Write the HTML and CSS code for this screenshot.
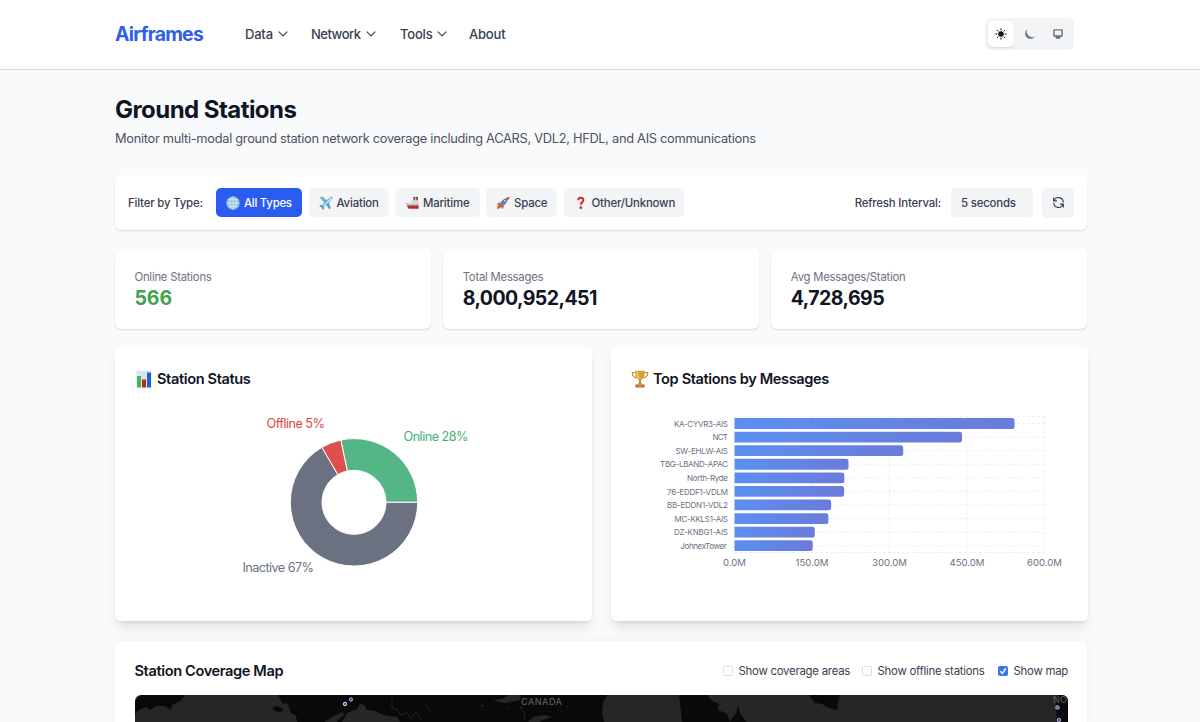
FILE: index.html
```html
<!DOCTYPE html>
<html lang="en">
<head>
  <meta charset="UTF-8">
  <meta name="viewport" content="width=device-width, initial-scale=1.0">
  <title>Ground Stations - Airframes</title>
  <link rel="stylesheet" href="styles.css">
</head>
<body>
  <header class="header">
    <div class="container header-inner">
      <a class="logo">Airframes</a>
      <nav class="nav">
        <a class="nav-data">Data <svg class="chevron" viewBox="0 0 10 6"><path d="M1 .8l4 4 4-4"/></svg></a>
        <a class="nav-network">Network <svg class="chevron" viewBox="0 0 10 6"><path d="M1 .8l4 4 4-4"/></svg></a>
        <a class="nav-tools">Tools <svg class="chevron" viewBox="0 0 10 6"><path d="M1 .8l4 4 4-4"/></svg></a>
        <a>About</a>
      </nav>
      <div class="theme-switch">
        <button class="active" aria-label="Light">
          <svg width="12" height="12" viewBox="0 0 12 12"><circle cx="6" cy="6" r="2.7" fill="currentColor"/><path d="M6 .8v1.3M6 9.9v1.3M.8 6h1.3M9.9 6h1.3M2.3 2.3l.9.9M8.8 8.8l.9.9M2.3 9.7l.9-.9M8.8 3.2l.9-.9" stroke="currentColor" stroke-width="1" stroke-linecap="round"/></svg>
        </button>
        <button aria-label="Dark">
          <svg width="12" height="12" viewBox="0 0 12 12"><path d="M3.6 1A5.300 5.300 0 1 0 11 8.200 5.300 5.300 0 0 1 3.600 1z" fill="currentColor"/></svg>
        </button>
        <button aria-label="System">
          <svg width="12" height="12" viewBox="0 0 12 12"><path d="M2.600 1.200h6.800a1.400 1.400 0 0 1 1.400 1.400v5a1.400 1.400 0 0 1-1.400 1.400H8.200v1.700H3.800V9H2.600a1.400 1.400 0 0 1-1.400-1.400v-5a1.400 1.400 0 0 1 1.400-1.400zM2.600 2.600v4.700h6.800V2.600z" fill="currentColor" fill-rule="evenodd"/></svg>
        </button>
      </div>
    </div>
  </header>

  <main class="container">
    <h1>Ground Stations</h1>
    <p class="subtitle">Monitor multi-modal ground station network coverage including ACARS, VDL2, HFDL, and AIS communications</p>

    <section class="filters">
      <span class="filter-label">Filter by Type:</span>
      <div class="filter-buttons">
        <button class="filter-all active">
          <svg class="emoji" viewBox="0 0 14 14"><circle cx="7" cy="7" r="6.6" fill="#8fc6ea"/><path d="M7 .4v13.200M.4 7h13.200M1.500 3.600h11M1.500 10.400h11M7 .4C2.500 4 2.500 10 7 13.600M7 .4c4.500 3.600 4.500 9.600 0 13.200" fill="none" stroke="#e4f3dd" stroke-width=".7"/><circle cx="7" cy="7" r="6.500" fill="none" stroke="#5e9bd1" stroke-width=".6"/></svg>
          <span>All Types</span>
        </button>
        <button class="filter-aviation">
          <svg class="emoji" viewBox="0 0 14 14"><path d="M1 1.500l3-.3 3.500 3.500 3.500-3c1-.9 2-.9 2.200-.5.2.5 0 1.300-1 2.200L9.500 6.500l2 5.500-1 1L7.300 8.600 4.500 11l.2 2-.8.5-1.100-2.200L.6 10l.7-.8 2 .2L5.700 6.500z" fill="#4f9fce" stroke="#3c7da8" stroke-width=".4"/><path d="M4.500 10L12.600 1.700" stroke="#dcecf5" stroke-width="1.300"/><path d="M2 1.900l4 2.700" stroke="#9ccbe6" stroke-width=".8"/></svg>
          <span>Aviation</span>
        </button>
        <button class="filter-maritime">
          <svg class="emoji" viewBox="0 0 14 14"><path d="M8.500 1h1.800v4H8.500zM11.200 1H13v4h-1.800z" fill="#c9372f"/><path d="M8.500 1h1.800v1.200H8.500zM11.200 1H13v1.200h-1.800z" fill="#40404a"/><path d="M6.500 4.300h6.800v4H5.500z" fill="#d9dcdf"/><path d="M.4 6.200l3.600 1.600h9.600v3H2.500z" fill="#b9bfc5"/><path d="M1.900 9.500h11.700v3.200H3.500z" fill="#b62d2b"/></svg>
          <span>Maritime</span>
        </button>
        <button class="filter-space">
          <svg class="emoji" viewBox="0 0 14 14"><path d="M2 10l-1.500 3.600L4.500 12z" fill="#f59d22"/><path d="M3.500 6.200L.8 8.300l3.400.6zM8 10l-1.800 3.200-1-3.200z" fill="#c83a2c"/><path d="M3.300 9.500C4.500 5 8 2 11.700 2.200 12 6 9 9.600 4.700 11z" fill="#7480a8"/><path d="M10 2.300c1-.8 2.500-1.400 3.500-1.600-.1 1.200-.7 2.500-1.500 3.500z" fill="#ce3e33"/><circle cx="9" cy="5" r="1.300" fill="#d6eaf8" stroke="#33456c" stroke-width=".5"/><path d="M1.300 9.800l3.200-1 .9 2.200-3.500 1.500z" fill="#e85325"/></svg>
          <span>Space</span>
        </button>
        <button class="filter-other">
          <svg class="emoji" viewBox="0 0 14 14"><path d="M4.200 4.200C4.200 2.500 5.300 1.700 6.700 1.700s2.700.9 2.700 2.400C9.400 6.300 6.900 6 6.900 8.700" fill="none" stroke="#cc2f27" stroke-width="2"/><circle cx="6.800" cy="11.700" r="1.400" fill="#cc2f27"/></svg>
          <span>Other/Unknown</span>
        </button>
      </div>
      <span class="refresh-label">Refresh Interval:</span>
      <button class="interval">5 seconds</button>
      <button class="refresh" aria-label="Refresh">
        <svg width="13" height="13" viewBox="0 0 13 13" fill="none" stroke="currentColor" stroke-width="1.2" stroke-linecap="round" stroke-linejoin="round"><path d="M1.700 2v2.900h2.900M11.300 11V8.100H8.400M2 4.900A4.700 4.700 0 0 1 11.200 6M11 8.100A4.700 4.700 0 0 1 1.800 7"/></svg>
      </button>
    </section>

    <section class="stats">
      <div class="stat">
        <div class="stat-label">Online Stations</div>
        <div class="stat-value green">566</div>
      </div>
      <div class="stat">
        <div class="stat-label">Total Messages</div>
        <div class="stat-value">8,000,952,451</div>
      </div>
      <div class="stat">
        <div class="stat-label">Avg Messages/Station</div>
        <div class="stat-value">4,728,695</div>
      </div>
    </section>

    <section class="charts">
      <div class="card">
        <h2>
          <svg class="emoji-lg" viewBox="0 0 18 18"><path d="M1.500.5h15v17h-15z" fill="#d5e6f2"/><path d="M2 6h4v11.500H2z" fill="#4bb749"/><path d="M7 9.500h4v8H7z" fill="#b52c2a"/><path d="M12 2.500h4v15h-4z" fill="#2b5fc0"/></svg>
          <span>Station Status</span>
        </h2>
        <svg class="chart" viewBox="135 397 437 205">
          <g stroke="#fff" stroke-width="1">
            <path d="M417.700 502.300A63.700 63.700 0 0 0 340.750 440L347.300 471A32 32 0 0 1 386 502.300z" fill="#54b685"/>
            <path d="M340.750 440A63.700 63.700 0 0 0 321.800 447.400L337.800 474.700A32 32 0 0 1 347.300 471z" fill="#df4f4c"/>
            <path d="M321.800 447.400A63.700 63.700 0 1 0 417.700 502.300H386A32 32 0 1 1 337.800 474.700z" fill="#6b7180"/>
          </g>
          <g class="pie-labels">
            <text x="403.500" y="440.500" textLength="65" fill="#45ae79">Online 28%</text>
            <text x="266.500" y="428" textLength="58.500" fill="#dc4646">Offline 5%</text>
            <text x="242.500" y="572" textLength="71.500" fill="#6b7180">Inactive 67%</text>
          </g>
        </svg>
      </div>
      <div class="card">
        <h2>
          <svg class="emoji-lg" viewBox="0 0 18 18"><path d="M4.500 2.500H1.300c0 3.500 1.700 5 4.500 5.500M13.500 2.500h3.200c0 3.500-1.700 5-4.500 5.500" fill="none" stroke="#c98c24" stroke-width="1.200"/><path d="M4 .8h10c0 5-1.300 8.700-5 9.700C5.300 9.500 4 5.800 4 .8z" fill="#d9a036"/><path d="M6.200 1.500c0 3.500.6 5.800 2 7.300" stroke="#f5d581" stroke-width="1.300" fill="none"/><path d="M8 10h2v3l1.800 1.500H6.200L8 13z" fill="#c58525"/><path d="M4.500 14.500h9v3h-9z" fill="#a5622c"/><path d="M6.500 15.500h5v1h-5z" fill="#e2b65c"/></svg>
          <span>Top Stations by Messages</span>
        </h2>
        <svg class="chart" viewBox="630.500 397 437 205">
          <defs>
            <linearGradient id="barGradient">
              <stop offset="0" stop-color="#5c8ff0"/>
              <stop offset="1" stop-color="#6a7bdb"/>
            </linearGradient>
          </defs>
          <g id="grid" class="grid"></g>
          <g id="bars"></g>
          <g id="names" class="names"></g>
          <g id="ticks" class="ticks"></g>
        </svg>
      </div>
    </section>

    <section class="map-card">
      <div class="map-header">
        <h2>Station Coverage Map</h2>
        <div class="map-options">
          <label class="opt-coverage"><span class="check"></span>Show coverage areas</label>
          <label class="opt-offline"><span class="check"></span>Show offline stations</label>
          <label class="opt-map"><span class="check checked"><svg viewBox="0 0 10 10"><path d="M2.300 5.300l2 2.200 3.500-5"/></svg></span>Show map</label>
        </div>
      </div>
      <svg class="map" viewBox="135 695 933 27">
        <rect x="135" y="695" width="933" height="27" fill="#262626"/>
        <g fill="#090909">
          <path d="M141 695H185L180 701 172 705 171 710 165 706 156 706 150 710 146 707 139 710 135 714V701z"/>
          <path d="M278 695H607L603 703 602 712 604 722H297L296 716 290 712 289 706 286 703 283 704z"/>
          <path d="M272 709l4-3 6 2 1 3-5 1zM246 706l3 0 0 1z"/>
          <path d="M679 695H707L711 700 719 704 718 710 727 714 730 722H682L681 712 680 704z"/>
          <path d="M738 705l2 8 5 7 1 2H730l2-4 4-4z"/>
          <path d="M809 695H840L838 702 837 710 829 708 822 704 815 703z"/>
          <path d="M1056 703l2-8h10v27h-11l-1-10z"/>
        </g>
        <g fill="#262626">
          <path d="M324 722l10-6 8-4 3 2-6 5-2 3zM342 722l5-9 10-4 3-6 5 3 2 4 8 1 8 4 14 2 3 5z"/>
          <path d="M493 700l9-1 6-4h13l-1 5-9 2-7 1zM528 722l5-5 10-2 10 2-7 2-8 3z"/>
          <path d="M480 706l4-2-1 3zM506 708l4-1 0 1zM567 705l3 5-3-3z"/>
        </g>
        <path d="M392 695v13l5 1 4 6 6-2 4 6 5-7 5 8M425 704l6 9M520 706l5 8-1 6" fill="none" stroke="#2b2b2b" stroke-width=".8"/>
        <text class="map-label" x="521" y="704.500" textLength="41">CANADA</text>
        <text class="map-label" x="1053" y="703" textLength="14">NO</text>
        <g stroke-width="1" fill="#315879">
          <circle cx="345" cy="704" r="1.700" stroke="#c7e2f4"/>
          <circle cx="351" cy="699.500" r="1.600" stroke="#b4b5ef"/>
          <circle cx="1057.500" cy="707.500" r="1.700" stroke="#b9dcf0"/>
          <circle cx="1059" cy="720" r="1.700" stroke="#c3a6e6"/>
        </g>
      </svg>
    </section>
  </main>

  <script>
    // [name, bar end x, label width]
    const stations = [
      ["KA-CYVR3-AIS", 1014, 54],
      ["NCT", 961.5, 15.5],
      ["SW-EHLW-AIS", 902.7, 52.5],
      ["TBG-LBAND-APAC", 848, 68],
      ["North-Ryde", 843.8, 41],
      ["76-EDDF1-VDLM", 843.6, 61],
      ["BB-EDDN1-VDL2", 830.6, 61],
      ["MC-KKLS1-AIS", 827.9, 53.5],
      ["DZ-KNBG1-AIS", 814.3, 54],
      ["JohnexTower", 812.2, 46.5]
    ];
    const left = 734, right = 1044, top0 = 416.7, rowHeight = 13.58;
    const bottom = top0 + rowHeight * stations.length;
    let grid = `<path d="M${left} ${top0}H${right}M${left} ${bottom}H${right}"/>`;
    let bars = "", names = "", ticks = "";

    stations.forEach(([name, end, width], i) => {
      const y = top0 + rowHeight * (i + 0.5);
      const nameEnd = name === "JohnexTower" ? 726.3 : 727.5;
      grid += `<path d="M${left} ${y}H${right}"/>`;
      bars += `<path d="M${left} ${y - 5.4}H${end - 2.5}q2.5 0 2.5 2.5v5.8q0 2.5-2.5 2.5H${left}z" fill="url(#barGradient)"/>`;
      names += `<text x="${nameEnd - width}" y="${y + 3.2}" textLength="${width}">${name}</text>`;
    });

    ["0.0M", "150.0M", "300.0M", "450.0M", "600.0M"].forEach((tick, i) => {
      const x = left + (right - left) * i / 4;
      grid += `<path d="M${x} ${top0}V${bottom}"/>`;
      ticks += `<text x="${x}" y="566.3">${tick}</text>`;
    });

    document.getElementById("grid").innerHTML = grid;
    document.getElementById("bars").innerHTML = bars;
    document.getElementById("names").innerHTML = names;
    document.getElementById("ticks").innerHTML = ticks;
  </script>
</body>
</html>
```
FILE: styles.css
```css
* {
  box-sizing: border-box;
}
body {
  margin: 0;
  font-family: Inter, sans-serif;
  background: #f9fafb;
  color: #101524;
}
button {
  border: none;
  padding: 0;
  font: inherit;
  letter-spacing: inherit;
  color: inherit;
  cursor: pointer;
}
.container {
  width: 972px;
  margin-left: 115px;
}
.header {
  height: 70px;
  background: #fff;
  border-bottom: 1px solid #dcdee1;
}
.header-inner {
  height: 67px;
  display: flex;
  align-items: center;
}
.logo {
  width: 130px;
  font-size: 19.4px;
  font-weight: 700;
  letter-spacing: -0.75px;
  color: #2e5fe8;
}
.nav {
  display: flex;
  font-size: 13px;
  font-weight: 500;
  letter-spacing: -0.2px;
  color: #384152;
}
.nav a {
  display: flex;
  align-items: center;
  gap: 5px;
}
.nav-data {
  width: 66px;
}
.nav .nav-network {
  width: 89px;
  letter-spacing: -0.5px;
}
.nav-tools {
  width: 69px;
}
.chevron {
  width: 10px;
  height: 6px;
  fill: none;
  stroke: #384152;
  stroke-width: 1.1;
  stroke-linecap: round;
  stroke-linejoin: round;
}
.theme-switch {
  display: flex;
  gap: 3px;
  padding: 3px;
  margin-left: auto;
  margin-right: 13px;
  width: 89px;
  height: 32px;
  border-radius: 6px;
  background: #f3f4f6;
}
.theme-switch button {
  display: flex;
  align-items: center;
  justify-content: center;
  width: 26px;
  height: 26px;
  border-radius: 5px;
  background: none;
  color: #67707e;
}
.theme-switch .active {
  background: #fff;
  color: #101524;
  box-shadow: 0 1px 2px rgba(0, 0, 0, 0.12);
}
h1 {
  margin: 24px 0 0;
  font-size: 24px;
  line-height: 31px;
  font-weight: 700;
  letter-spacing: -0.55px;
}
.subtitle {
  margin: 4px 0 0;
  font-size: 12.8px;
  line-height: 20px;
  letter-spacing: -0.28px;
  color: #4b5361;
}
.filters {
  display: flex;
  align-items: center;
  height: 55px;
  margin-top: 26px;
  padding: 0 13px;
  border-radius: 6px;
  background: #fff;
  box-shadow: 0 1px 2px rgba(0, 0, 0, 0.12);
  font-size: 11.4px;
  font-weight: 500;
  letter-spacing: -0.18px;
  color: #384152;
  white-space: nowrap;
}
.filter-label {
  width: 88px;
}
.filter-buttons {
  display: flex;
  gap: 6.5px;
}
.filter-buttons button {
  display: flex;
  align-items: center;
  gap: 4px;
  height: 29px;
  padding-left: 10px;
  border-radius: 5px;
  background: #f3f4f6;
}
.filter-buttons .active {
  background: #2b5cf2;
  color: #fff;
  letter-spacing: -0.25px;
}
.filter-all {
  width: 86px;
}
.filter-aviation {
  width: 80px;
}
.filter-maritime {
  width: 84.5px;
}
.filter-space {
  width: 71px;
}
.filter-other {
  width: 120.5px;
}
.emoji {
  width: 14px;
  height: 14px;
}
.refresh-label {
  margin-left: auto;
}
.interval {
  width: 82px;
  height: 29px;
  margin-left: 10px;
  padding-left: 10px;
  border-radius: 5px;
  background: #f3f4f6;
  text-align: left;
}
.refresh {
  display: flex;
  align-items: center;
  justify-content: center;
  width: 32px;
  height: 30px;
  margin-left: 9px;
  border-radius: 5px;
  background: #f3f4f6;
}
.stats {
  display: grid;
  grid-template-columns: repeat(3, 1fr);
  gap: 12.5px;
  margin-top: 19px;
}
.stat {
  height: 80px;
  padding: 19px 19.5px;
  border-radius: 6px;
  background: #fff;
  box-shadow: 0 1px 2px rgba(0, 0, 0, 0.12);
}
.stat-label {
  font-size: 11.3px;
  line-height: 18px;
  letter-spacing: -0.22px;
  color: #6b7180;
}
.stat-value {
  font-size: 19.5px;
  line-height: 25px;
  font-weight: 700;
  letter-spacing: -0.55px;
}
.green {
  letter-spacing: -0.1px;
  color: #3fa24e;
}
.charts {
  display: grid;
  grid-template-columns: 1fr 1fr;
  gap: 19px;
  margin-top: 19px;
}
.card {
  height: 273px;
  padding: 19px 20px;
  border-radius: 6px;
  background: #fff;
  box-shadow: 0 8px 12px -2px rgba(0, 0, 0, 0.1), 0 3px 5px -3px rgba(0, 0, 0, 0.12);
}
h2 {
  display: flex;
  align-items: center;
  gap: 4px;
  margin: 0;
  font-size: 14.6px;
  line-height: 22px;
  font-weight: 600;
  letter-spacing: -0.38px;
}
.card h2 {
  height: 23px;
}
.emoji-lg {
  width: 18px;
  height: 18px;
}
.chart {
  display: block;
  width: 437px;
  height: 205px;
  margin-top: 7px;
}
.pie-labels {
  font-size: 12.7px;
}
.grid {
  fill: none;
  stroke: #e7e9ec;
  stroke-width: 0.8;
  stroke-dasharray: 2.4 2.4;
}
.names {
  font-size: 8px;
  fill: #6b7180;
}
.ticks {
  font-size: 9.6px;
  fill: #6b7180;
  text-anchor: middle;
}
.map-card {
  height: 81px;
  margin-top: 20px;
  padding: 18px 19.5px 0;
  border-radius: 6px 6px 0 0;
  background: #fff;
  box-shadow: 0 0 8px rgba(0, 0, 0, 0.05);
}
.map-header {
  display: flex;
  justify-content: space-between;
  align-items: center;
  height: 23px;
}
.map-options {
  display: flex;
  font-size: 11.4px;
  letter-spacing: -0.25px;
  color: #384152;
}
.map-options label {
  display: flex;
  align-items: center;
  gap: 6px;
  white-space: nowrap;
}
.opt-coverage {
  width: 139px;
}
.opt-offline {
  width: 136px;
}
.opt-map {
  width: 70px;
}
.check {
  flex: none;
  width: 10px;
  height: 10px;
  border: 1px solid #dcdee2;
  border-radius: 2px;
  background: #fff;
}
.checked {
  border: none;
  background: #3777ee;
}
.check svg {
  display: block;
  fill: none;
  stroke: #fff;
  stroke-width: 1.4;
}
.map {
  display: block;
  width: 933px;
  height: 27px;
  margin-top: 13px;
  border-radius: 6px 6px 0 0;
}
.map-label {
  font-size: 9px;
  font-weight: 500;
  fill: #5a5a5a;
}
```
